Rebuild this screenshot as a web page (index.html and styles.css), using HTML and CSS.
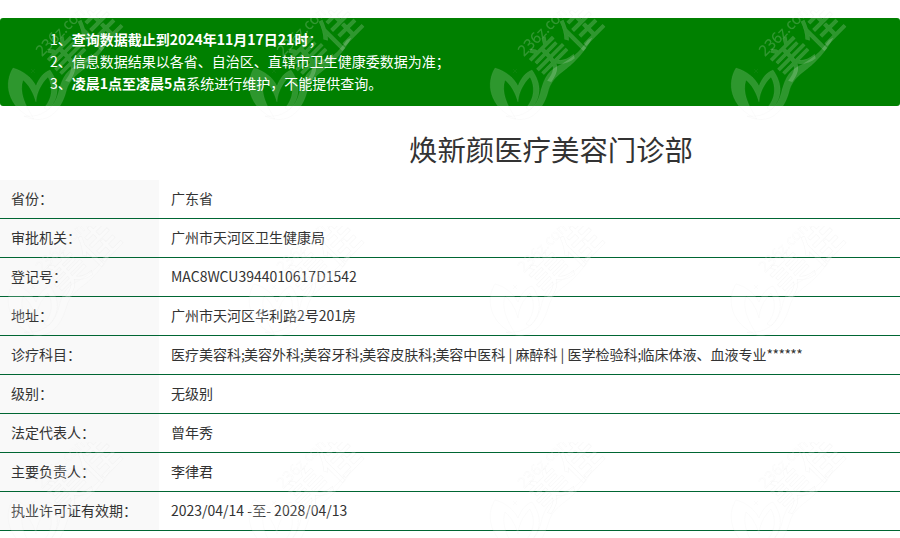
FILE: index.html
```html
<!DOCTYPE html>
<html lang="zh-CN">
<head>
<meta charset="utf-8">
<title>焕新颜医疗美容门诊部</title>
<link rel="stylesheet" href="styles.css">
</head>
<body>
<div class="notice">
  <p>1、<strong>查询数据截止到2024年11月17日21时</strong>；</p>
  <p>2、信息数据结果以各省、自治区、直辖市卫生健康委数据为准；</p>
  <p>3、<strong>凌晨1点至凌晨5点</strong>系统进行维护，不能提供查询。</p>
</div>
<h1 class="title">焕新颜医疗美容门诊部</h1>
<dl class="info">
  <div class="row"><dt>省份：</dt><dd>广东省</dd></div>
  <div class="row"><dt>审批机关：</dt><dd>广州市天河区卫生健康局</dd></div>
  <div class="row"><dt>登记号：</dt><dd>MAC8WCU3944010617D1542</dd></div>
  <div class="row"><dt>地址：</dt><dd>广州市天河区华利路2号201房</dd></div>
  <div class="row"><dt>诊疗科目：</dt><dd>医疗美容科<span class="sep">;</span>美容外科<span class="sep">;</span>美容牙科<span class="sep">;</span>美容皮肤科<span class="sep">;</span>美容中医科 | 麻醉科 | 医学检验科<span class="sep">;</span>临床体液、血液专业<span class="mask">******</span></dd></div>
  <div class="row"><dt>级别：</dt><dd>无级别</dd></div>
  <div class="row"><dt>法定代表人：</dt><dd>曾年秀</dd></div>
  <div class="row"><dt>主要负责人：</dt><dd>李律君</dd></div>
  <div class="row"><dt>执业许可证有效期：</dt><dd>2023/04/14 -至- 2028/04/13</dd></div>
</dl>
<svg class="watermark" aria-hidden="true" width="900" height="538">
  <defs>
    <pattern id="mark" x="-2" y="10" width="241" height="216" patternUnits="userSpaceOnUse">
      <g class="mark-shape">
        <path d="M15 58C6 72 8 97 36 109C27 95 21 82 25 70C31 75 35 82 38 92C39 80 45 72 50 67C55 76 55 88 46 98L50 100C62 88 62 74 52 60C46 62 41 68 38 76C34 68 26 61 15 58Z"/>
        <path d="M26 106C46 116 62 104 68 82C72 66 84 62 94 52C102 44 108 36 112 28L108 30C100 42 90 50 78 56C66 62 63 72 60 84C56 98 44 108 26 106Z"/>
        <path d="M33 59L37 63M37 59L33 63"/>
        <text class="mark-big" transform="translate(66.5 71.7) rotate(-45)">美</text>
        <text class="mark-big" transform="translate(96.5 42.7) rotate(-45)">佳</text>
        <text class="mark-url" transform="translate(44 47) rotate(-45)">236z.com</text>
      </g>
    </pattern>
  </defs>
  <rect width="900" height="538" fill="url(#mark)"/>
</svg>
</body>
</html>
```
FILE: styles.css
```css
html, body {
  margin: 0;
  padding: 0;
  background: #fff;
}
body {
  position: relative;
  height: 538px;
  overflow: hidden;
  padding-top: 18px;
  box-sizing: border-box;
  font-family: "Noto Sans CJK SC", sans-serif;
  font-size: 14px;
  color: #333;
}
.notice {
  padding: 10px 0 12px 50px;
  background: #008000;
  border-radius: 3px;
  color: #fff;
  line-height: 22px;
}
.notice p {
  margin: 0;
}
.notice strong {
  font-weight: 600;
}
.title {
  margin: 0;
  padding: 24px 0 12px 202px;
  text-align: center;
  font-size: 28.4px;
  line-height: 38px;
  font-weight: 400;
  color: #333;
}
.info {
  margin: 0;
}
.row {
  display: grid;
  grid-template-columns: 159px 1fr;
  height: 38px;
  border-bottom: 1px solid #006633;
}
.row dt {
  padding-left: 11px;
  background: #f9f9f9;
  line-height: 36px;
}
.row dd {
  margin: 0;
  padding-left: 12px;
  line-height: 36px;
  white-space: nowrap;
}
.sep {
  letter-spacing: -0.8px;
}
.mask {
  letter-spacing: -0.6px;
}
.watermark {
  position: absolute;
  left: 0;
  top: 0;
  pointer-events: none;
}
.mark-shape {
  fill: #fff;
  fill-opacity: 0.18;
  stroke: #b8b8b8;
  stroke-opacity: 0.12;
  stroke-width: 0.5;
}
.mark-big {
  font-family: "Noto Sans CJK SC", sans-serif;
  font-size: 40px;
  font-weight: 500;
}
.mark-url {
  font-family: "Open Sans", sans-serif;
  font-size: 15px;
  stroke-width: 0.3;
}
```
